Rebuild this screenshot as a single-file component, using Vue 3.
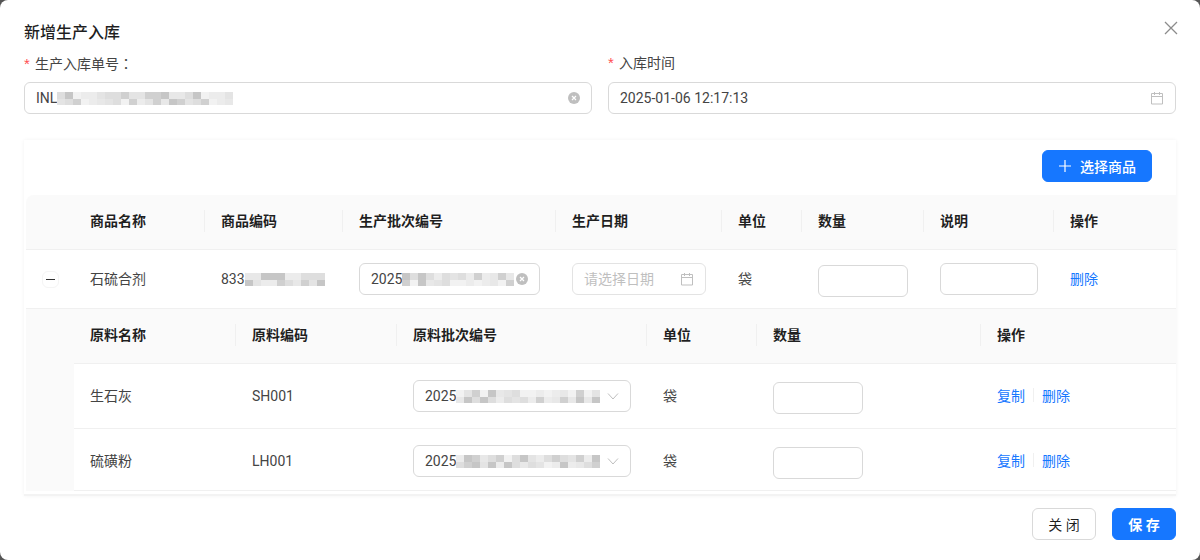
<template>
  <div class="modal">
    <button class="close-btn" aria-label="close">
      <svg viewBox="0 0 14 14" width="14" height="14"><path d="M1 1l12 12M13 1L1 13" /></svg>
    </button>
    <h2 class="title">新增生产入库</h2>

    <div class="form-row">
      <div class="field">
        <label class="label"><i class="star">*</i>生产入库单号<span class="colon">：</span></label>
        <div class="input">
          <span>INL</span>
          <span class="mosaic">
            <i v-for="(c, idx) in cells(1, 22)" :key="idx" :style="{ background: c }"></i>
          </span>
          <svg class="clear" viewBox="0 0 12 12"><circle cx="6" cy="6" r="6" /><path d="M4 4l4 4M8 4l-4 4" /></svg>
        </div>
      </div>
      <div class="field">
        <label class="label"><i class="star">*</i>入库时间</label>
        <div class="input">
          <span>2025-01-06 12:17:13</span>
          <svg class="cal" viewBox="0 0 14 14"><path d="M1.5 2.5h11v10.500h-11zM1.500 5.500h11M4.500 1v3M9.500 1v3" /></svg>
        </div>
      </div>
    </div>

    <div class="card">
      <div class="toolbar">
        <button class="btn primary add">
          <svg viewBox="0 0 12 12" width="12" height="12"><path d="M6 0v12M0 6h12" /></svg>
          选择商品
        </button>
      </div>

      <div class="grid main head">
        <div></div>
        <div v-for="h in mainHeads" :key="h" class="th">{{ h }}</div>
      </div>

      <div class="grid main row">
        <div class="expand-cell"><span class="expand"><i></i></span></div>
        <div class="td cn">石硫合剂</div>
        <div class="td">
          833<span class="mosaic">
            <i v-for="(c, idx) in cells(2, 10)" :key="idx" :style="{ background: c }"></i>
          </span>
        </div>
        <div class="td">
          <div class="input batch">
            <span>2025</span>
            <span class="mosaic">
              <i v-for="(c, idx) in cells(3, 14)" :key="idx" :style="{ background: c }"></i>
            </span>
            <svg class="clear" viewBox="0 0 12 12"><circle cx="6" cy="6" r="6" /><path d="M4 4l4 4M8 4l-4 4" /></svg>
          </div>
        </div>
        <div class="td">
          <div class="input date">
            <span class="placeholder">请选择日期</span>
            <svg class="cal" viewBox="0 0 14 14"><path d="M1.5 2.5h11v10.500h-11zM1.500 5.500h11M4.500 1v3M9.500 1v3" /></svg>
          </div>
        </div>
        <div class="td cn">袋</div>
        <div class="td"><div class="input qty"></div></div>
        <div class="td"><div class="input note"></div></div>
        <div class="td cn"><a class="link">删除</a></div>
      </div>

      <div class="expanded">
        <div class="grid sub head">
          <div v-for="h in subHeads" :key="h" class="th">{{ h }}</div>
        </div>
        <div v-for="(m, i) in materials" :key="m.code" class="grid sub row">
          <div class="td cn">{{ m.name }}</div>
          <div class="td">{{ m.code }}</div>
          <div class="td">
            <div class="input select">
              <span>2025</span>
              <span class="mosaic">
                <i v-for="(c, idx) in cells(4 + i, 18)" :key="idx" :style="{ background: c }"></i>
              </span>
              <svg class="arrow" viewBox="0 0 12 12"><path d="M1 3.500l5 5.500 5-5.500" /></svg>
            </div>
          </div>
          <div class="td cn">袋</div>
          <div class="td"><div class="input qty"></div></div>
          <div class="td cn">
            <a class="link">复制</a><span class="divider"></span><a class="link">删除</a>
          </div>
        </div>
      </div>
    </div>

    <div class="footer">
      <button class="btn">关 闭</button>
      <button class="btn primary strong">保 存</button>
    </div>
  </div>
</template>

<script setup>
const mainHeads = ['商品名称', '商品编码', '生产批次编号', '生产日期', '单位', '数量', '说明', '操作'];
const subHeads = ['原料名称', '原料编码', '原料批次编号', '单位', '数量', '操作'];

const materials = [
  { name: '生石灰', code: 'SH001' },
  { name: '硫磺粉', code: 'LH001' },
];

// fake pixelation for the masked values, two cells per column
const shades = ['#e4e4e4', '#d0d0d0', '#ececec', '#c6c6c6', '#dedede', '#f2f2f2', '#e8e8e8'];
const cells = (seed, cols) => {
  const out = [];
  let x = seed * 31 + 5;
  for (let i = 0; i < cols * 2; i++) {
    x = (x * 137 + 11) % 257;
    out.push(shades[x % shades.length]);
  }
  return out;
};
</script>

<style scoped>
.modal {
  position: relative;
  box-sizing: border-box;
  width: 1200px;
  height: 560px;
  padding: 21px 24px 20px;
  background: #fff;
  border-radius: 8px;
  color: rgba(0, 0, 0, 0.88);
  font-family: Roboto, "Noto Sans CJK SC", sans-serif;
  font-size: 14px;
}

.close-btn {
  position: absolute;
  top: 21px;
  right: 22px;
  padding: 0;
  border: 0;
  background: none;
  line-height: 0;
}

.close-btn path {
  fill: none;
  stroke: #8c8c8c;
  stroke-width: 1.300;
}

.title {
  margin: 0 0 6px;
  font-size: 16px;
  font-weight: 500;
  line-height: 24px;
}

.form-row {
  display: grid;
  grid-template-columns: 1fr 1fr;
  gap: 16px;
}

.label {
  display: block;
  height: 22px;
  margin-bottom: 9px;
  line-height: 24px;
  color: #444;
}

.colon {
  font-family: "Noto Sans CJK TC", sans-serif;
}

.star {
  display: inline-block;
  width: 11px;
  color: #ff4d4f;
  font-style: normal;
  font-size: 15px;
  font-family: "Liberation Sans", sans-serif;
}

.input {
  display: flex;
  align-items: center;
  box-sizing: border-box;
  height: 32px;
  padding: 0 11px;
  background: #fff;
  border: 1px solid #d9d9d9;
  border-radius: 6px;
  color: #444;
}

.mosaic {
  display: inline-grid;
  grid-template-rows: 7px 6px;
  grid-auto-flow: column;
  grid-auto-columns: 8px;
  filter: blur(0.6px);
}

.clear {
  flex: none;
  width: 12px;
  height: 12px;
  margin-left: auto;
}

.clear circle {
  fill: #bfbfbf;
}

.clear path {
  fill: none;
  stroke: #fff;
  stroke-width: 1.200;
}

.cal {
  flex: none;
  width: 14px;
  height: 14px;
  margin-left: auto;
}

.cal path {
  fill: none;
  stroke: #bfbfbf;
}

.card {
  box-sizing: border-box;
  height: 356px;
  margin-top: 26px;
  padding-left: 2px;
  overflow: hidden;
  border-bottom: 2px solid #f3f3f3;
  box-shadow: 0 0 4px rgba(0, 0, 0, 0.05);
}

.toolbar {
  display: flex;
  justify-content: flex-end;
  padding: 10px 24px 13px 0;
}

.btn {
  height: 32px;
  padding: 0 15px;
  background: #fff;
  border: 1px solid #d9d9d9;
  border-radius: 6px;
  color: rgba(0, 0, 0, 0.88);
  font-family: inherit;
  font-size: 14px;
}

.btn.primary {
  background: #1677ff;
  border-color: #1677ff;
  color: #fff;
}

.btn.strong {
  font-weight: 600;
}

.add {
  display: flex;
  align-items: center;
  gap: 9px;
  width: 110px;
  padding: 0 0 0 16px;
  font-weight: 500;
  white-space: nowrap;
}

.add path {
  fill: none;
  stroke: #fff;
  stroke-width: 1.200;
}

.grid {
  display: grid;
  align-items: center;
  border-bottom: 1px solid #f0f0f0;
}

.main {
  grid-template-columns: 48px 131px 138px 213px 166px 80px 122px 130px 122px;
}

.sub {
  grid-template-columns: 162px 161px 250px 110px 224px 195px;
}

.head {
  height: 55px;
  box-sizing: border-box;
  background: #fafafa;
}

.main.head {
  border-top-left-radius: 8px;
}

.main.row {
  height: 59px;
  box-sizing: border-box;
}

.sub.row {
  height: 65px;
  box-sizing: border-box;
  background: #fff;
}

.sub.row:last-child {
  height: 62px;
  padding-top: 3px;
}

.th {
  position: relative;
  padding-left: 16px;
  padding-bottom: 2px;
  font-weight: 600;
  line-height: 22px;
}

.th::before {
  content: "";
  position: absolute;
  top: 0;
  left: -1px;
  width: 1px;
  height: 22px;
  background: #f0f0f0;
}

.main .th:nth-child(2)::before,
.sub .th:first-child::before {
  display: none;
}

.td {
  display: flex;
  align-items: center;
  padding-left: 16px;
  color: #444;
}

.td.cn {
  padding-bottom: 2px;
}

.expand-cell {
  display: flex;
  justify-content: center;
}

.expand {
  display: flex;
  align-items: center;
  justify-content: center;
  box-sizing: border-box;
  width: 17px;
  height: 17px;
  border: 1px solid #f5f5f5;
  border-radius: 6px;
}

.expand i {
  display: block;
  width: 9px;
  height: 1px;
  background: #333;
}

.batch {
  width: 181px;
}

.date {
  width: 134px;
  border-color: #e3e3e3;
}

.placeholder {
  margin-bottom: 2px;
  color: #bfbfbf;
}

.qty {
  width: 90px;
  margin-top: 4px;
}

.note {
  width: 98px;
}

.select {
  width: 218px;
}

.arrow {
  flex: none;
  width: 12px;
  height: 12px;
  margin-left: auto;
}

.arrow path {
  fill: none;
  stroke: #bfbfbf;
}

.link {
  color: #1677ff;
}

.divider {
  width: 1px;
  height: 14px;
  margin: 0 8px;
  background: #f0f0f0;
}

.expanded {
  padding-left: 48px;
  background: #fafafa;
}

.footer {
  display: flex;
  justify-content: flex-end;
  gap: 16px;
  margin-top: 12px;
}

.footer .btn {
  width: 64px;
  padding: 0;
}
</style>

<style>
body {
  background: #555;
}
</style>
